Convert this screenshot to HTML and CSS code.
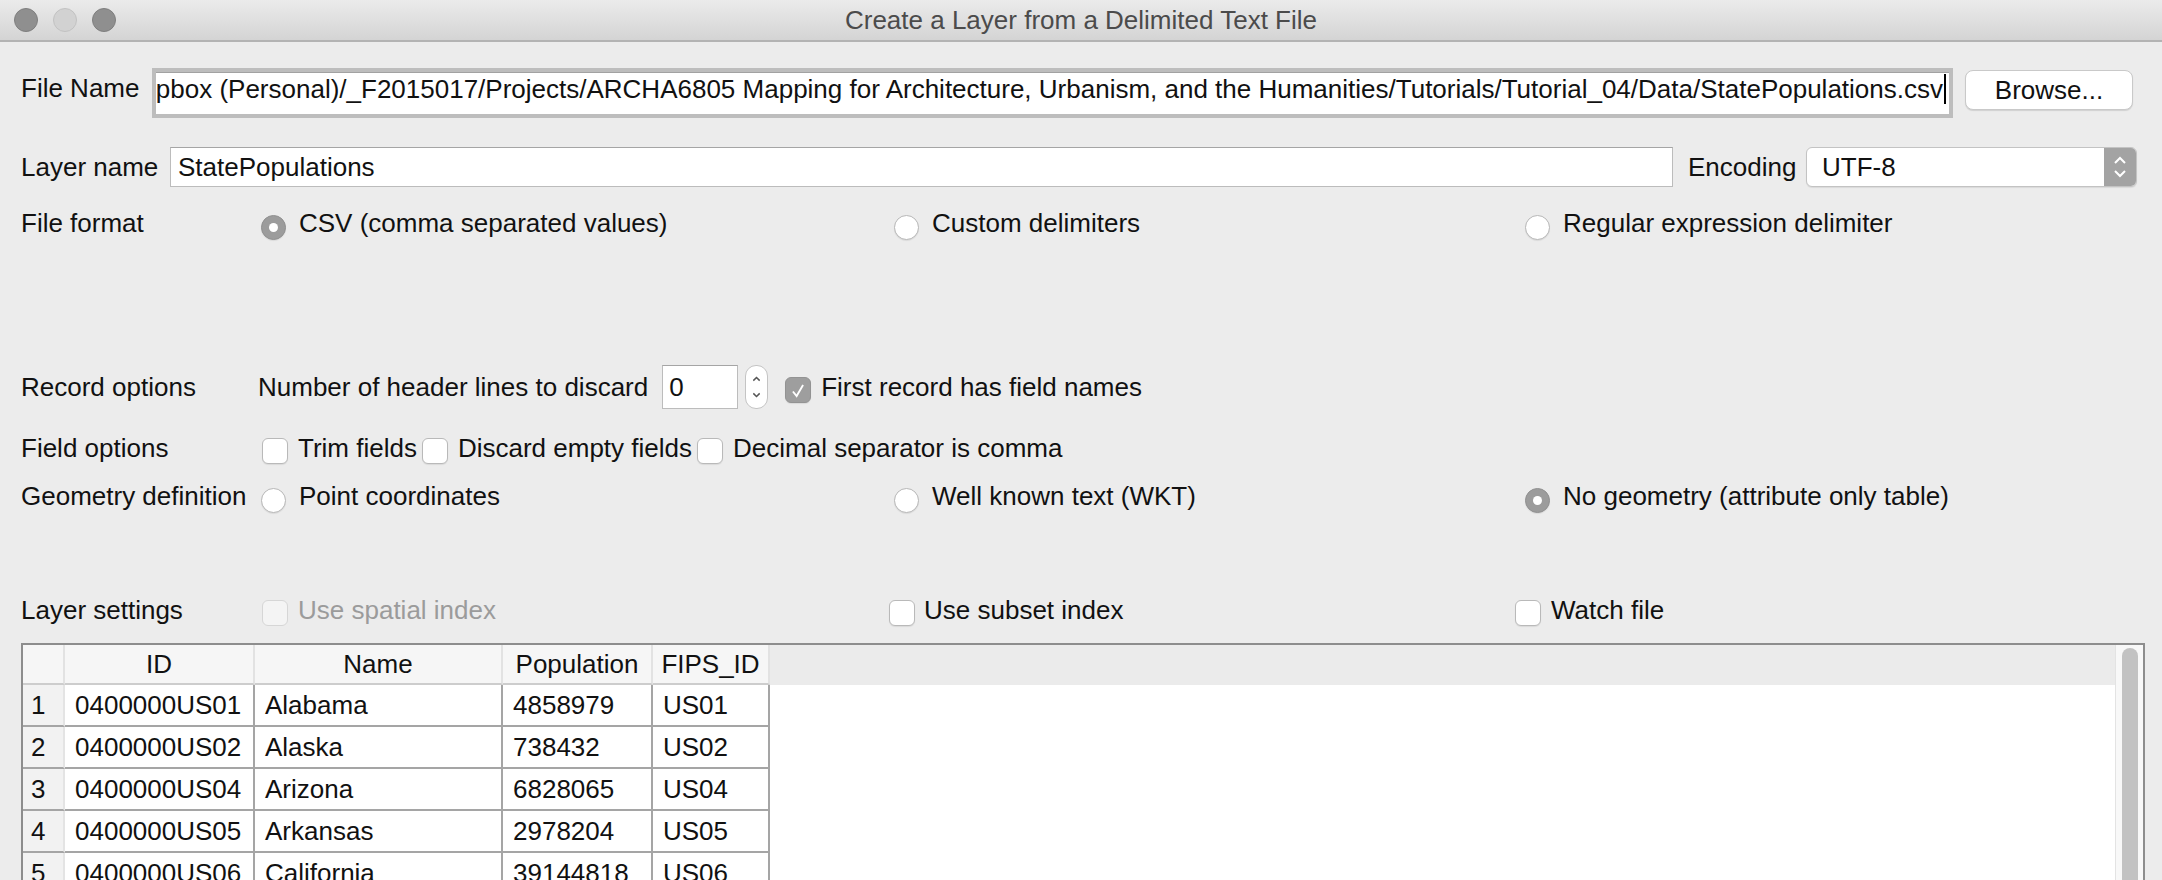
FILE: index.html
```html
<!DOCTYPE html>
<html lang="en">
<head>
<meta charset="utf-8">
<title>Create a Layer from a Delimited Text File</title>
<link rel="stylesheet" href="styles.css">
</head>
<body>
<div class="window">
  <header class="titlebar">
    <div class="lights">
      <span class="light light-dark"></span>
      <span class="light light-pale"></span>
      <span class="light light-dark"></span>
    </div>
    <div class="title">Create a Layer from a Delimited Text File</div>
    <div class="titlebar-end"></div>
  </header>

  <main class="content">
    <div class="row row-file">
      <span class="label label-file">File Name</span>
      <div class="path-field">
        <span class="path-text">opbox (Personal)/_F2015017/Projects/ARCHA6805 Mapping for Architecture, Urbanism, and the Humanities/Tutorials/Tutorial_04/Data/StatePopulations.csv</span><span class="caret"></span>
      </div>
      <button class="btn">Browse...</button>
    </div>

    <div class="row row-layer">
      <span class="label label-layer">Layer name</span>
      <div class="text-field layer-field">StatePopulations</div>
      <span class="label label-enc">Encoding</span>
      <div class="select">
        <span class="select-value">UTF-8</span>
        <span class="select-arrows">
          <svg width="32" height="40" viewBox="0 0 32 40"><path d="M11 16 L16 11 L21 16" fill="none" stroke="#fff" stroke-width="2"/><path d="M11 24 L16 29 L21 24" fill="none" stroke="#fff" stroke-width="2"/></svg>
        </span>
      </div>
    </div>

    <div class="opt-row row-format">
      <span class="label">File format</span>
      <div class="choice"><span class="radio radio-on"></span><span>CSV (comma separated values)</span></div>
      <div class="choice"><span class="radio"></span><span>Custom delimiters</span></div>
      <div class="choice"><span class="radio"></span><span>Regular expression delimiter</span></div>
    </div>

    <div class="flow-row row-record">
      <span class="label label-col">Record options</span>
      <span class="header-lines">Number of header lines to discard</span>
      <div class="text-field spin-field">0</div>
      <span class="spin-arrows">
        <svg width="23" height="44" viewBox="0 0 23 44"><path d="M8 15 L11.5 11.5 L15 15" fill="none" stroke="#555" stroke-width="1.6"/><path d="M8 29 L11.5 32.5 L15 29" fill="none" stroke="#555" stroke-width="1.6"/></svg>
      </span>
      <span class="check check-on check-first">
        <svg width="26" height="26" viewBox="0 0 26 26"><path d="M7.5 13.5 L11.5 18.5 L18.5 6.5" fill="none" stroke="#fff" stroke-width="2"/></svg>
      </span>
      <span>First record has field names</span>
    </div>

    <div class="flow-row row-field">
      <span class="label label-col">Field options</span>
      <div class="choice choice-tight"><span class="check"></span><span>Trim fields</span></div>
      <div class="choice choice-tight"><span class="check"></span><span>Discard empty fields</span></div>
      <div class="choice choice-tight"><span class="check"></span><span>Decimal separator is comma</span></div>
    </div>

    <div class="opt-row row-geom">
      <span class="label">Geometry definition</span>
      <div class="choice"><span class="radio"></span><span>Point coordinates</span></div>
      <div class="choice"><span class="radio"></span><span>Well known text (WKT)</span></div>
      <div class="choice"><span class="radio radio-on"></span><span>No geometry (attribute only table)</span></div>
    </div>

    <div class="settings-row">
      <span class="label">Layer settings</span>
      <div class="choice is-disabled"><span class="check check-disabled"></span><span>Use spatial index</span></div>
      <div class="choice"><span class="check"></span><span>Use subset index</span></div>
      <div class="choice"><span class="check"></span><span>Watch file</span></div>
    </div>

    <div class="table-frame">
      <div class="table-area">
        <table class="grid">
          <colgroup>
            <col class="c-num"><col class="c-id"><col class="c-name"><col class="c-pop"><col class="c-fips"><col>
          </colgroup>
          <thead>
            <tr><th class="corner"></th><th>ID</th><th>Name</th><th>Population</th><th>FIPS_ID</th><th class="fill"></th></tr>
          </thead>
          <tbody>
            <tr><td class="num">1</td><td>0400000US01</td><td>Alabama</td><td>4858979</td><td>US01</td><td class="fill"></td></tr>
            <tr><td class="num">2</td><td>0400000US02</td><td>Alaska</td><td>738432</td><td>US02</td><td class="fill"></td></tr>
            <tr><td class="num">3</td><td>0400000US04</td><td>Arizona</td><td>6828065</td><td>US04</td><td class="fill"></td></tr>
            <tr><td class="num">4</td><td>0400000US05</td><td>Arkansas</td><td>2978204</td><td>US05</td><td class="fill"></td></tr>
            <tr><td class="num">5</td><td>0400000US06</td><td>California</td><td>39144818</td><td>US06</td><td class="fill"></td></tr>
            <tr><td class="num">6</td><td>0400000US08</td><td>Colorado</td><td>5456574</td><td>US08</td><td class="fill"></td></tr>
          </tbody>
        </table>
      </div>
      <div class="vscroll"><div class="thumb"></div></div>
    </div>
  </main>
</div>
</body>
</html>
```

FILE: styles.css
```css
* { box-sizing: border-box; }

html, body {
  margin: 0;
  padding: 0;
}

body {
  width: 2162px;
  height: 880px;
  overflow: hidden;
  background: #ececec;
  font-family: "Liberation Sans", Arial, Helvetica, sans-serif;
  font-size: 26px;
  color: #111;
}

.window {
  display: flex;
  flex-direction: column;
  height: 880px;
}

/* ---------- title bar ---------- */
.titlebar {
  flex: none;
  height: 42px;
  display: grid;
  grid-template-columns: 1fr auto 1fr;
  align-items: center;
  background: linear-gradient(#ebebeb, #d4d4d4);
  border-bottom: 2px solid #b3b3b3;
}

.lights {
  display: flex;
  gap: 15px;
  padding-left: 14px;
}

.light {
  width: 24px;
  height: 24px;
  border-radius: 50%;
}

.light-dark {
  background: #8f8f8f;
  border: 1px solid #7f7f7f;
}

.light-pale {
  background: #d2d2d2;
  border: 1px solid #c2c2c2;
}

.title {
  color: #4b4b4b;
  font-size: 26px;
}

/* ---------- content ---------- */
.content {
  flex: 1;
  display: flex;
  flex-direction: column;
  padding: 0 17px 0 21px;
  min-height: 0;
}

.label { white-space: nowrap; }

.row {
  display: flex;
  align-items: center;
}

.row-file {
  margin-top: 26px;
  height: 50px;
}

.label-file {
  width: 131px;
  margin-bottom: 10px;
}

.path-field {
  width: 1801px;
  height: 50px;
  border: 4px solid #bdbdbd;
  box-shadow: inset 0 1px 0 #a2a2a2;
  background: #fff;
  overflow: hidden;
  display: flex;
  justify-content: flex-end;
  align-items: center;
  padding: 0 3px 8px 0;
}

.path-text {
  flex: none;
  white-space: nowrap;
}

.caret {
  flex: none;
  width: 2px;
  height: 30px;
  background: #000;
  margin-left: 1px;
}

.btn {
  margin-left: 12px;
  margin-bottom: 6px;
  width: 168px;
  height: 40px;
  background: #fff;
  border: 1px solid #c9c9c9;
  border-radius: 8px;
  box-shadow: 0 1px 1px rgba(0, 0, 0, 0.12);
  font-family: inherit;
  font-size: 26px;
  color: #111;
  padding: 0;
}

.row-layer {
  margin-top: 29px;
  height: 40px;
}

.label-layer { width: 149px; }

.text-field {
  background: #fff;
  border: 1px solid #bcbcbc;
  border-top-color: #a5a5a5;
  display: flex;
  align-items: center;
  white-space: nowrap;
}

.layer-field {
  width: 1503px;
  height: 40px;
  padding-left: 7px;
}

.label-enc {
  margin-left: 15px;
  width: 118px;
}

.select {
  width: 331px;
  height: 40px;
  background: #fff;
  border: 1px solid #c3c3c3;
  border-radius: 6px;
  display: flex;
  align-items: center;
  overflow: hidden;
  box-shadow: 0 1px 1px rgba(0, 0, 0, 0.08);
}

.select-value {
  flex: 1;
  padding-left: 15px;
}

.select-arrows {
  width: 32px;
  height: 100%;
  background: #a3a3a3;
  display: flex;
  align-items: center;
  justify-content: center;
}

/* ---------- option rows ---------- */
.opt-row {
  display: grid;
  grid-template-columns: 240px 633px 631px 1fr;
  align-items: center;
  height: 34px;
}

.row-format { margin-top: 19px; }
.row-geom { margin-top: 14px; }

.flow-row {
  display: flex;
  align-items: center;
}

.label-col {
  width: 240px;
  flex: none;
}

.row-record {
  margin-top: 125px;
  height: 44px;
}

.header-lines { margin-left: -3px; }

.spin-field {
  margin-left: 14px;
  width: 76px;
  height: 44px;
  padding-left: 6px;
}

.spin-arrows {
  margin-left: 7px;
  width: 23px;
  height: 44px;
  background: #fff;
  border: 1px solid #c4c4c4;
  border-radius: 11px;
  display: flex;
  align-items: center;
  justify-content: center;
  overflow: hidden;
}

.check-first {
  margin-left: 17px;
  margin-right: 9px;
}

.row-field {
  margin-top: 22px;
  height: 34px;
}

.row-field .choice:first-of-type { margin-left: 1px; }

.choice {
  display: flex;
  align-items: center;
  white-space: nowrap;
}

.choice-tight { margin-right: 5px; }

.radio {
  flex: none;
  width: 25px;
  height: 25px;
  border-radius: 50%;
  background: #fff;
  border: 1px solid #b7b7b7;
  box-shadow: 0 1px 1px rgba(0, 0, 0, 0.08);
  margin-right: 13px;
  margin-top: 8px;
  display: flex;
  align-items: center;
  justify-content: center;
}

.radio-on {
  background: #9c9c9c;
  border-color: #909090;
}

.radio-on::after {
  content: "";
  width: 9px;
  height: 9px;
  border-radius: 50%;
  background: #fff;
}

.check {
  flex: none;
  width: 26px;
  height: 26px;
  border-radius: 6px;
  background: #fff;
  border: 1px solid #b9b9b9;
  box-shadow: 0 1px 1px rgba(0, 0, 0, 0.08);
  margin-right: 10px;
  margin-top: 6px;
  display: flex;
}

.check-on {
  background: #9e9e9e;
  border-color: #939393;
}

.check-disabled {
  border-color: #d6d6d6;
  background: #f4f4f4;
  box-shadow: none;
}

.is-disabled { color: #9b9b9b; }

.settings-row {
  display: grid;
  grid-template-columns: 241px 627px 626px 1fr;
  align-items: center;
  height: 34px;
  margin-top: 80px;
}

.settings-row .choice:nth-child(3) .check { margin-right: 9px; }

/* ---------- table ---------- */
.table-frame {
  margin-top: 16px;
  flex: 1;
  min-height: 0;
  display: flex;
  border: 2px solid #8d8d8d;
  border-bottom: none;
  overflow: hidden;
}

.table-area {
  flex: 1;
  background: #fff;
  overflow: hidden;
}

.grid {
  width: 100%;
  table-layout: fixed;
  border-collapse: separate;
  border-spacing: 0;
  font-size: 26px;
}

.c-num { width: 42px; }
.c-id { width: 190px; }
.c-name { width: 248px; }
.c-pop { width: 150px; }
.c-fips { width: 117px; }

.grid th {
  height: 40px;
  padding: 0;
  font-weight: normal;
  text-align: center;
  background: #f6f6f6;
  border-right: 2px solid #e2e2e2;
  border-bottom: 2px solid #cdcdcd;
  white-space: nowrap;
}

.grid th.fill {
  background: #ebebeb;
  border: none;
}

.grid td {
  height: 42px;
  padding: 0 0 0 10px;
  border-right: 2px solid #a5a5a5;
  border-bottom: 2px solid #a5a5a5;
  white-space: nowrap;
  overflow: hidden;
}

.grid td.num {
  background: #f2f2f2;
  padding-left: 8px;
  border-right: 2px solid #e4e4e4;
}

.grid td.fill {
  border: none;
}

.vscroll {
  flex: none;
  width: 28px;
  background: #f8f8f8;
  border-left: 1px solid #e3e3e3;
  padding: 3px 5px 0 6px;
  overflow: hidden;
}

.thumb {
  width: 16px;
  height: 600px;
  border-radius: 8px;
  background: #c2c2c2;
}
```
